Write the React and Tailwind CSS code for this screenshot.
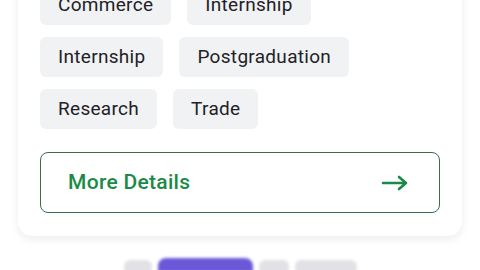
import React from 'react';

const tags = [
  ['Commerce', 'Internship'],
  ['Internship', 'Postgraduation'],
  ['Research', 'Trade'],
];

const App = () => {
  return (
    <div className="w-[480px] h-[270px] overflow-hidden bg-white relative" style={{ fontFamily: 'Roboto, "Noto Sans", sans-serif' }}>
      <div className="mx-[18px] -mt-[40px] bg-white rounded-b-[14px] shadow-[0_3px_10px_rgba(0,0,0,0.08)] px-[22px] pb-[23px]">
        <div className="pt-[25px] flex flex-col gap-[12px]">
          {tags.map((row, i) => (
            <div key={i} className="flex gap-[16px]">
              {row.map(t => (
                <span key={t} className="h-[40px] px-[18px] rounded-[6px] bg-[#f1f2f4] text-[#1f2126] text-[19px] tracking-[0.3px] leading-[40px]">
                  {t}
                </span>
              ))}
            </div>
          ))}
        </div>
        <button className="mt-[23px] w-full h-[61px] rounded-[8px] border-[1.5px] border-[#3b6e48] flex items-center justify-between pl-[27px] pr-[30px]">
          <span className="text-[21px] tracking-[0.3px] font-medium text-[#1b8a48]">More Details</span>
          <svg width="28" height="16" viewBox="0 0 28 16" fill="none" stroke="#1b8a48" strokeWidth="2.6" strokeLinecap="round" strokeLinejoin="round">
            <path d="M2 8h23M18 2l7 6-7 6" />
          </svg>
        </button>
      </div>
      <div className="absolute left-0 right-0 top-[258px] flex justify-center gap-[6px] blur-[1.5px]">
        <div className="w-[28px] h-[14px] mt-[2px] rounded-[6px] bg-[#e2e2e6]" />
        <div className="w-[95px] h-[14px] rounded-t-[8px] bg-[#6b58d8]" />
        <div className="w-[30px] h-[14px] mt-[2px] rounded-[6px] bg-[#e2e2e6]" />
        <div className="w-[62px] h-[14px] mt-[2px] rounded-[6px] bg-[#e2e2e6]" />
      </div>
    </div>
  );
};

export default App;
